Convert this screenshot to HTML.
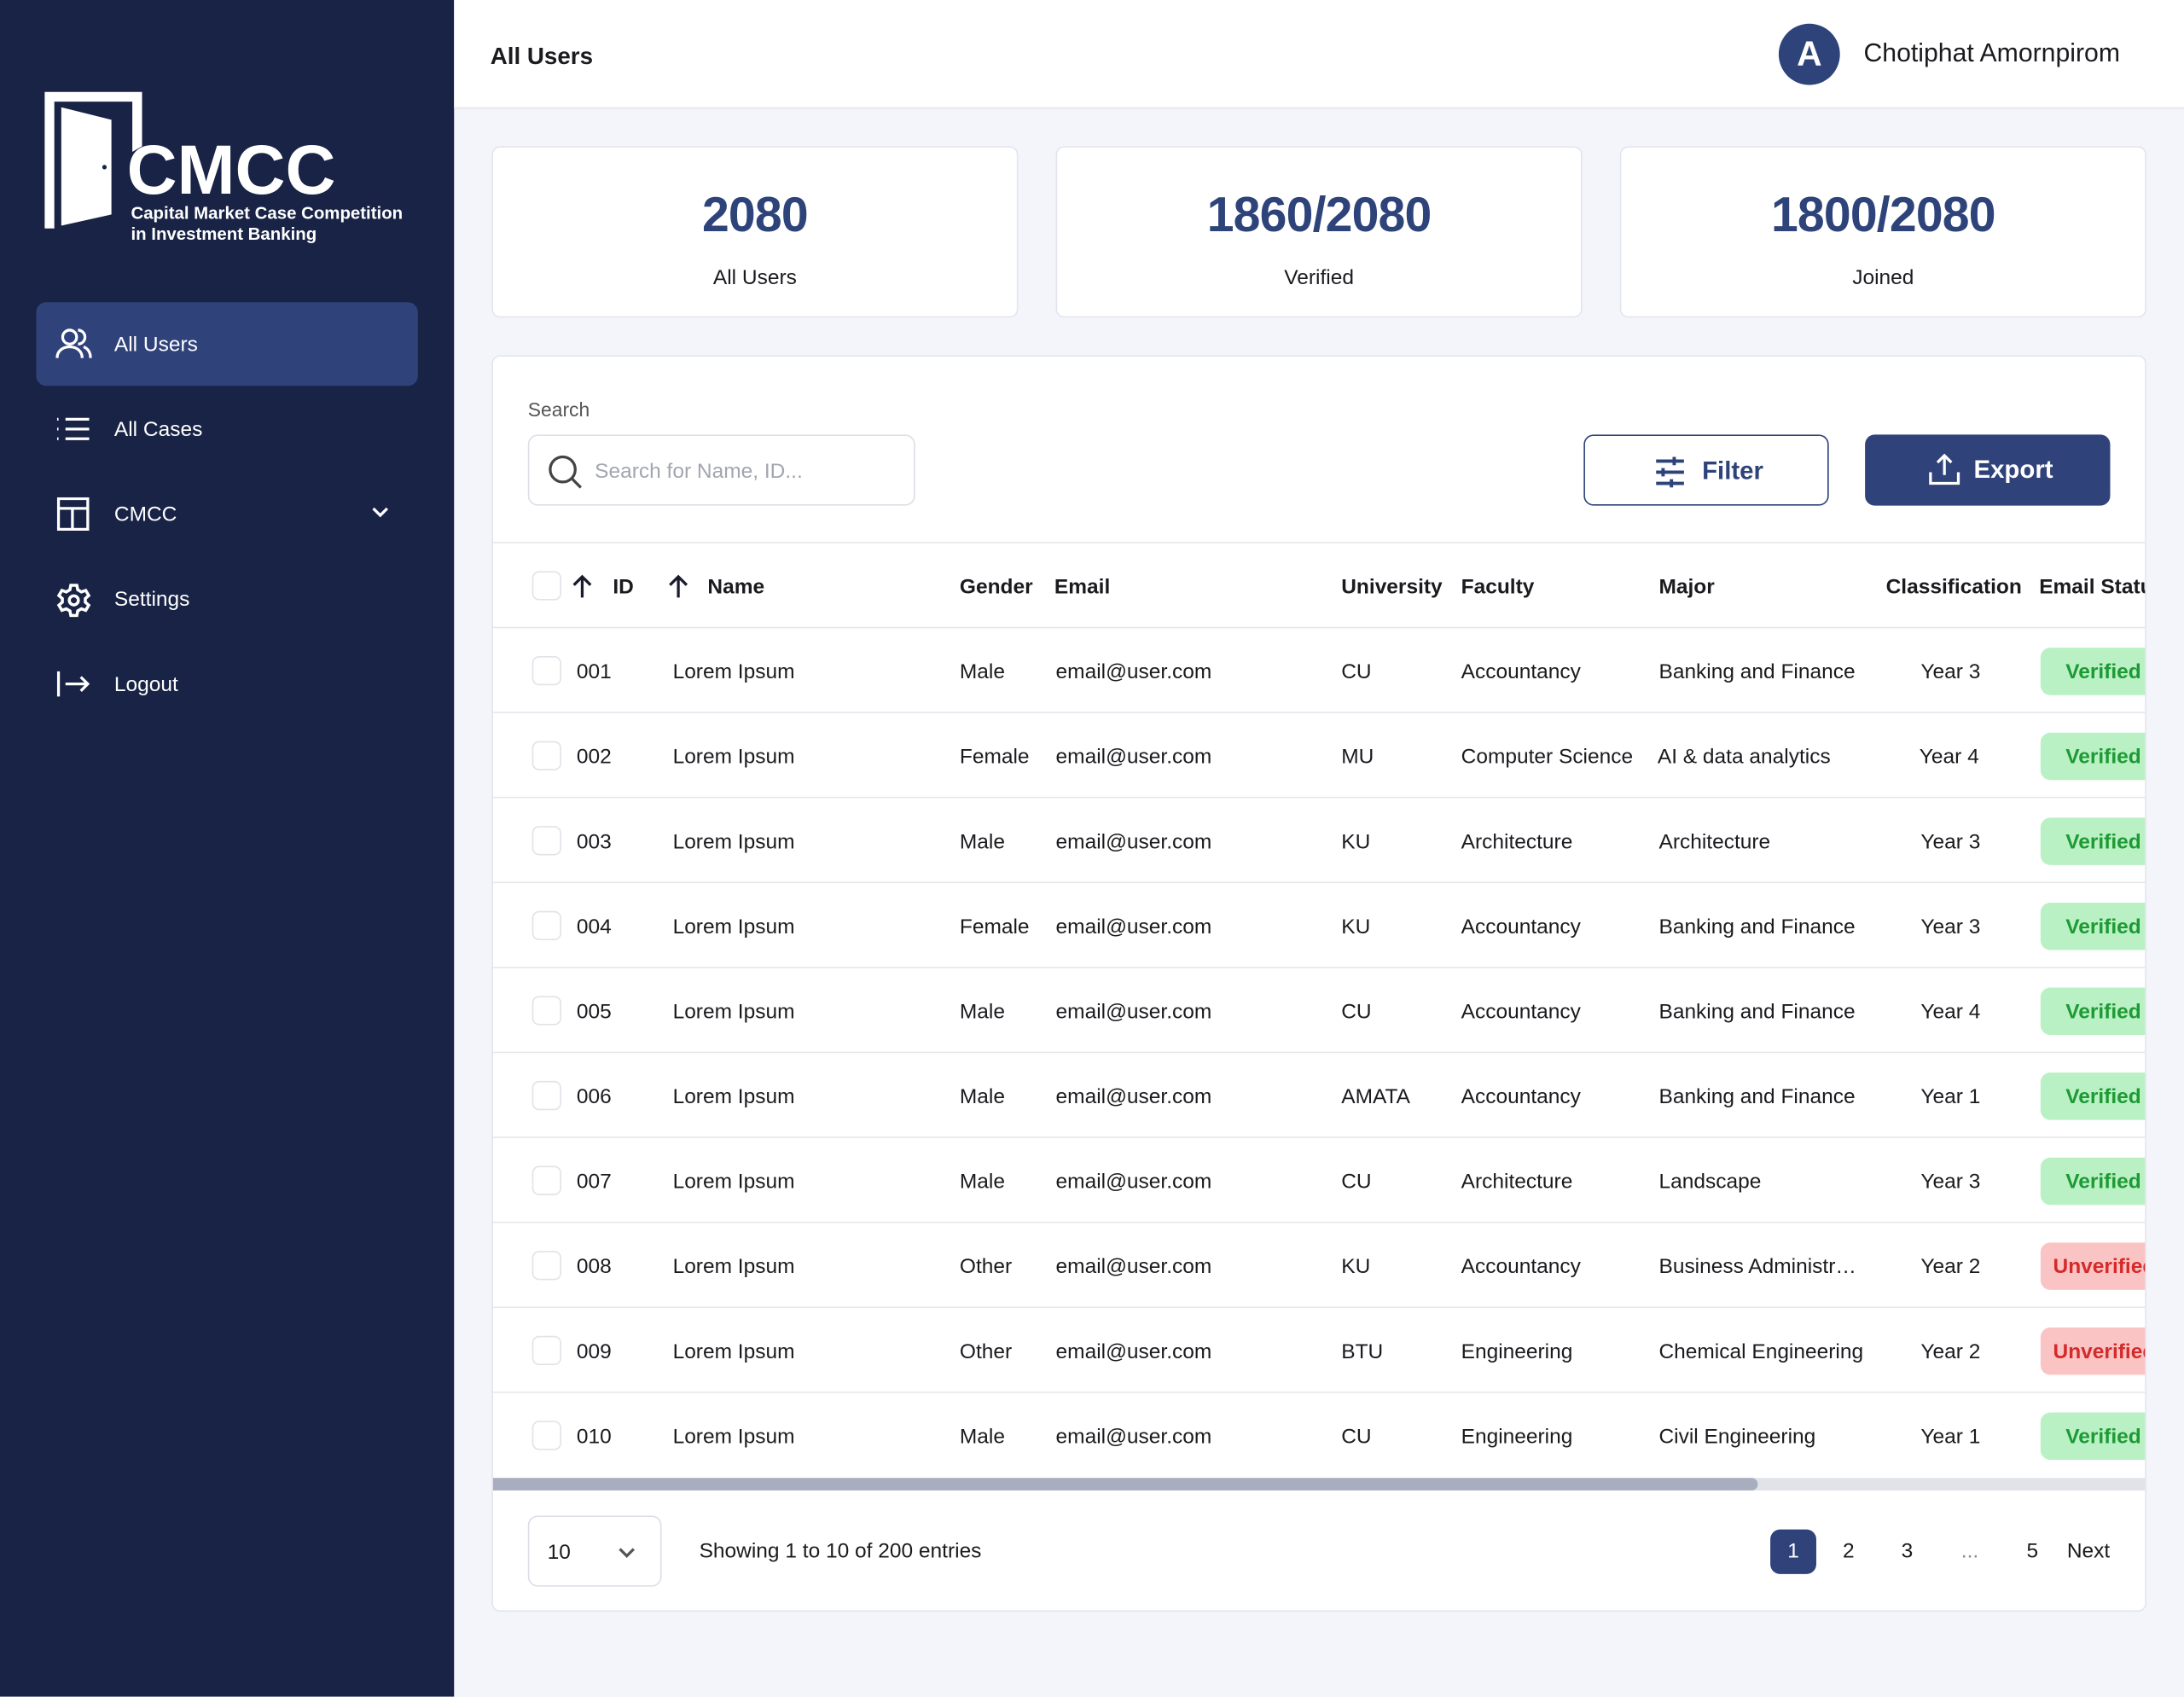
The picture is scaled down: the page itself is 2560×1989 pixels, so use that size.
<!DOCTYPE html>
<html><head><meta charset="utf-8"><style>
*{box-sizing:border-box;margin:0;padding:0}
html,body{width:2560px;height:1988px;overflow:hidden;background:#f4f5fb;font-family:"Liberation Sans",sans-serif;color:#1b1b1f}
#w{position:absolute;left:0;top:0;width:1568px;height:1218px;transform:scale(1.63265);transform-origin:0 0}
.a{position:absolute}
#side{left:0;top:0;width:326px;height:1218px;background:#182345}
.nav{left:26px;width:274px;height:60px;border-radius:7px;color:#fff;font-size:15px}
.nav span{position:absolute;left:56px;top:22px}
.nav svg{position:absolute;left:14px;top:18px}
#hdr{left:326px;top:0;width:1242px;height:78px;background:#fff;border-bottom:1px solid #e2e4ea}
.card{background:#fff;border:1px solid #e3e5ee;border-radius:6px}
.stat{top:105px;width:378px;height:123px}
.stat b{position:absolute;left:0;right:0;top:29px;text-align:center;font-size:35px;color:#2d4379;letter-spacing:-0.5px}
.stat i{position:absolute;left:0;right:0;top:85px;text-align:center;font-size:15px;font-style:normal}
.row{left:354px;width:1186px;height:61px;border-bottom:1px solid #e6e7ec;font-size:15px;overflow:hidden}
.row .c{position:absolute;top:23px;white-space:nowrap}
.cb{position:absolute;left:28px;top:20px;width:21px;height:21px;border:1px solid #e1e3e8;border-radius:5px;background:#fff}
.bd{position:absolute;left:1111px;top:14px;width:90px;height:34px;border-radius:7px;font-weight:bold;padding:9px 0 0 18px}
.v{background:#b9f1c5;color:#1e9a34}.u{background:#fbc4c4;color:#d42a2a;padding-left:9px}
.hd .c{font-weight:bold}
</style></head><body><div id="w">
<div id="side" class="a">
<svg class="a" style="left:32px;top:65px" width="72" height="102" viewBox="0 0 72 102"><path d="M0 1H70V40L63 44V8H7V99H0Z" fill="#fff"/><path d="M12 12L48 21V89L12 97Z" fill="#fff"/><circle cx="43" cy="55" r="1.6" fill="#182345"/></svg>
<div class="a" style="left:91px;top:93px;color:#fff;font-size:50px;font-weight:bold;letter-spacing:0px">CMCC</div>
<div class="a" style="left:94px;top:146px;color:#fff;font-size:12.5px;font-weight:bold;line-height:15px">Capital Market Case Competition<br>in Investment Banking</div>
<div class="a nav" style="top:217px;background:#2f427a"><svg width="26" height="24" viewBox="0 0 26 24" fill="none" stroke="#fff" stroke-width="2"><circle cx="10" cy="7" r="5"/><path d="M1 22c0-5 4-8 9-8s9 3 9 8M16 2a5 5 0 0 1 0 10M20 14c3 1 5 4 5 8"/></svg><span>All Users</span></div>
<div class="a nav" style="top:278px"><svg width="26" height="24" viewBox="0 0 26 24" fill="none" stroke="#fff" stroke-width="2"><path d="M7 5h17M7 12h17M7 19h17M1 5h1M1 12h1M1 19h1"/></svg><span>All Cases</span></div>
<div class="a nav" style="top:339px"><svg width="26" height="24" viewBox="0 0 26 24" fill="none" stroke="#fff" stroke-width="2"><rect x="2" y="1" width="21" height="22"/><path d="M2 8h21M12 8v15"/></svg><span>CMCC</span><svg style="left:240px;top:24px" width="14" height="10" viewBox="0 0 14 10" fill="none" stroke="#fff" stroke-width="2"><path d="M2 2l5 5 5-5"/></svg></div>
<div class="a nav" style="top:400px"><svg width="26" height="26" viewBox="0 0 24 24" fill="none" stroke="#fff" stroke-width="2"><path d="M10 2h4l.6 3 2.4 1.4 2.9-1 2 3.4-2.3 2v2.4l2.3 2-2 3.4-2.9-1L14.6 19 14 22h-4l-.6-3L7 17.6l-2.9 1-2-3.4 2.3-2v-2.4l-2.3-2 2-3.4 2.9 1L9.4 5z"/><circle cx="12" cy="12" r="3"/></svg><span>Settings</span></div>
<div class="a nav" style="top:461px"><svg width="26" height="24" viewBox="0 0 26 24" fill="none" stroke="#fff" stroke-width="2"><path d="M2 3v18M7 12h16M18 7l5 5-5 5"/></svg><span>Logout</span></div>
</div>
<div id="hdr" class="a"><div class="a" style="left:26px;top:31px;font-size:17px;font-weight:bold">All Users</div>
<div class="a" style="left:951px;top:17px;width:44px;height:44px;border-radius:50%;background:#2d4379;color:#fff;font-size:25px;font-weight:bold;text-align:center;line-height:44px">A</div>
<div class="a" style="left:1012px;top:27px;font-size:18.5px">Chotiphat Amornpirom</div></div>
<div class="a card stat" style="left:353px"><b>2080</b><i>All Users</i></div>
<div class="a card stat" style="left:758px"><b>1860/2080</b><i>Verified</i></div>
<div class="a card stat" style="left:1163px"><b>1800/2080</b><i>Joined</i></div>
<div class="a card" style="left:353px;top:255px;width:1188px;height:902px"></div>
<div class="a" style="left:379px;top:286px;font-size:14px;color:#555">Search</div>
<div class="a" style="left:379px;top:312px;width:278px;height:51px;border:1px solid #dcdfe6;border-radius:7px;background:#fff"><svg class="a" style="left:13px;top:13px" width="26" height="26" viewBox="0 0 26 26" fill="none" stroke="#444" stroke-width="2"><circle cx="11" cy="11" r="9"/><path d="M18 18l6 6"/></svg><div class="a" style="left:47px;top:17px;font-size:15px;color:#a3a6b0">Search for Name, ID...</div></div>
<div class="a" style="left:1137px;top:312px;width:176px;height:51px;border:1.5px solid #2d4379;border-radius:7px;background:#fff"><svg class="a" style="left:50px;top:15px" width="22" height="22" viewBox="0 0 22 22" fill="none" stroke="#2d4379" stroke-width="2.4"><path d="M1 3h20M1 11h20M1 19h20"/><path d="M14 0v6M6 8v6M12 16v6" /></svg><div class="a" style="left:84px;top:15px;font-size:18px;font-weight:bold;color:#2d4379">Filter</div></div>
<div class="a" style="left:1339px;top:312px;width:176px;height:51px;border-radius:7px;background:#2f427a"><svg class="a" style="left:45px;top:13px" width="24" height="24" viewBox="0 0 24 24" fill="none" stroke="#fff" stroke-width="2"><path d="M12 16V2M7 7l5-5 5 5M2 14v8h20v-8"/></svg><div class="a" style="left:78px;top:15px;font-size:18px;font-weight:bold;color:#fff">Export</div></div>
<div class="a" style="left:354px;top:389px;width:1186px;border-top:1px solid #e6e7ec"></div>
<div class="a row hd" style="top:390px"><div class="cb"></div>
<svg class="a" style="left:56px;top:22px" width="16" height="18" viewBox="0 0 16 18" fill="none" stroke="#1b1b2f" stroke-width="2"><path d="M8 17V2M2 8l6-6 6 6"/></svg><div class="c" style="left:86px">ID</div>
<svg class="a" style="left:125px;top:22px" width="16" height="18" viewBox="0 0 16 18" fill="none" stroke="#1b1b2f" stroke-width="2"><path d="M8 17V2M2 8l6-6 6 6"/></svg><div class="c" style="left:154px">Name</div>
<div class="c" style="left:335px">Gender</div><div class="c" style="left:403px">Email</div><div class="c" style="left:609px">University</div><div class="c" style="left:695px">Faculty</div><div class="c" style="left:837px">Major</div><div class="c" style="left:1000px">Classification</div><div class="c" style="left:1110px">Email Status</div></div>
<div class="a row" style="top:451px"><div class="cb"></div><div class="c" style="left:60px">001</div><div class="c" style="left:129px">Lorem Ipsum</div><div class="c" style="left:335px">Male</div><div class="c" style="left:404px">email@user.com</div><div class="c" style="left:609px">CU</div><div class="c" style="left:695px">Accountancy</div><div class="c" style="left:837px">Banking and Finance</div><div class="c" style="left:1025px">Year 3</div><div class="bd v">Verified</div></div>
<div class="a row" style="top:512px"><div class="cb"></div><div class="c" style="left:60px">002</div><div class="c" style="left:129px">Lorem Ipsum</div><div class="c" style="left:335px">Female</div><div class="c" style="left:404px">email@user.com</div><div class="c" style="left:609px">MU</div><div class="c" style="left:695px">Computer Science</div><div class="c" style="left:836px">AI &amp; data analytics</div><div class="c" style="left:1024px">Year 4</div><div class="bd v">Verified</div></div>
<div class="a row" style="top:573px"><div class="cb"></div><div class="c" style="left:60px">003</div><div class="c" style="left:129px">Lorem Ipsum</div><div class="c" style="left:335px">Male</div><div class="c" style="left:404px">email@user.com</div><div class="c" style="left:609px">KU</div><div class="c" style="left:695px">Architecture</div><div class="c" style="left:837px">Architecture</div><div class="c" style="left:1025px">Year 3</div><div class="bd v">Verified</div></div>
<div class="a row" style="top:634px"><div class="cb"></div><div class="c" style="left:60px">004</div><div class="c" style="left:129px">Lorem Ipsum</div><div class="c" style="left:335px">Female</div><div class="c" style="left:404px">email@user.com</div><div class="c" style="left:609px">KU</div><div class="c" style="left:695px">Accountancy</div><div class="c" style="left:837px">Banking and Finance</div><div class="c" style="left:1025px">Year 3</div><div class="bd v">Verified</div></div>
<div class="a row" style="top:695px"><div class="cb"></div><div class="c" style="left:60px">005</div><div class="c" style="left:129px">Lorem Ipsum</div><div class="c" style="left:335px">Male</div><div class="c" style="left:404px">email@user.com</div><div class="c" style="left:609px">CU</div><div class="c" style="left:695px">Accountancy</div><div class="c" style="left:837px">Banking and Finance</div><div class="c" style="left:1025px">Year 4</div><div class="bd v">Verified</div></div>
<div class="a row" style="top:756px"><div class="cb"></div><div class="c" style="left:60px">006</div><div class="c" style="left:129px">Lorem Ipsum</div><div class="c" style="left:335px">Male</div><div class="c" style="left:404px">email@user.com</div><div class="c" style="left:609px">AMATA</div><div class="c" style="left:695px">Accountancy</div><div class="c" style="left:837px">Banking and Finance</div><div class="c" style="left:1025px">Year 1</div><div class="bd v">Verified</div></div>
<div class="a row" style="top:817px"><div class="cb"></div><div class="c" style="left:60px">007</div><div class="c" style="left:129px">Lorem Ipsum</div><div class="c" style="left:335px">Male</div><div class="c" style="left:404px">email@user.com</div><div class="c" style="left:609px">CU</div><div class="c" style="left:695px">Architecture</div><div class="c" style="left:837px">Landscape</div><div class="c" style="left:1025px">Year 3</div><div class="bd v">Verified</div></div>
<div class="a row" style="top:878px"><div class="cb"></div><div class="c" style="left:60px">008</div><div class="c" style="left:129px">Lorem Ipsum</div><div class="c" style="left:335px">Other</div><div class="c" style="left:404px">email@user.com</div><div class="c" style="left:609px">KU</div><div class="c" style="left:695px">Accountancy</div><div class="c" style="left:837px">Business Administr…</div><div class="c" style="left:1025px">Year 2</div><div class="bd u">Unverified</div></div>
<div class="a row" style="top:939px"><div class="cb"></div><div class="c" style="left:60px">009</div><div class="c" style="left:129px">Lorem Ipsum</div><div class="c" style="left:335px">Other</div><div class="c" style="left:404px">email@user.com</div><div class="c" style="left:609px">BTU</div><div class="c" style="left:695px">Engineering</div><div class="c" style="left:837px">Chemical Engineering</div><div class="c" style="left:1025px">Year 2</div><div class="bd u">Unverified</div></div>
<div class="a row" style="top:1000px;border-bottom:none"><div class="cb"></div><div class="c" style="left:60px">010</div><div class="c" style="left:129px">Lorem Ipsum</div><div class="c" style="left:335px">Male</div><div class="c" style="left:404px">email@user.com</div><div class="c" style="left:609px">CU</div><div class="c" style="left:695px">Engineering</div><div class="c" style="left:837px">Civil Engineering</div><div class="c" style="left:1025px">Year 1</div><div class="bd v">Verified</div></div>
<div class="a" style="left:354px;top:1061px;width:1186px;height:9px;background:#e1e3e8"></div>
<div class="a" style="left:354px;top:1061px;width:908px;height:9px;background:#a9adc0;border-radius:0 5px 5px 0"></div>
<div class="a" style="left:379px;top:1088px;width:96px;height:51px;border:1px solid #dcdfe6;border-radius:7px;background:#fff"><div class="a" style="left:13px;top:17px;font-size:15px">10</div><svg class="a" style="left:63px;top:21px" width="14" height="10" viewBox="0 0 14 10" fill="none" stroke="#555" stroke-width="2"><path d="M2 2l5 5 5-5"/></svg></div>
<div class="a" style="left:502px;top:1105px;font-size:15px">Showing 1 to 10 of 200 entries</div>
<div class="a" style="left:1271px;top:1098px;width:33px;height:32px;border-radius:7px;background:#2f427a;color:#fff;font-size:15px;text-align:center;line-height:32px">1</div>
<div class="a" style="left:1323px;top:1105px;font-size:15px">2</div>
<div class="a" style="left:1365px;top:1105px;font-size:15px">3</div>
<div class="a" style="left:1408px;top:1105px;font-size:15px;color:#888">...</div>
<div class="a" style="left:1455px;top:1105px;font-size:15px">5</div>
<div class="a" style="left:1484px;top:1105px;font-size:15px">Next</div>
</div></body></html>
